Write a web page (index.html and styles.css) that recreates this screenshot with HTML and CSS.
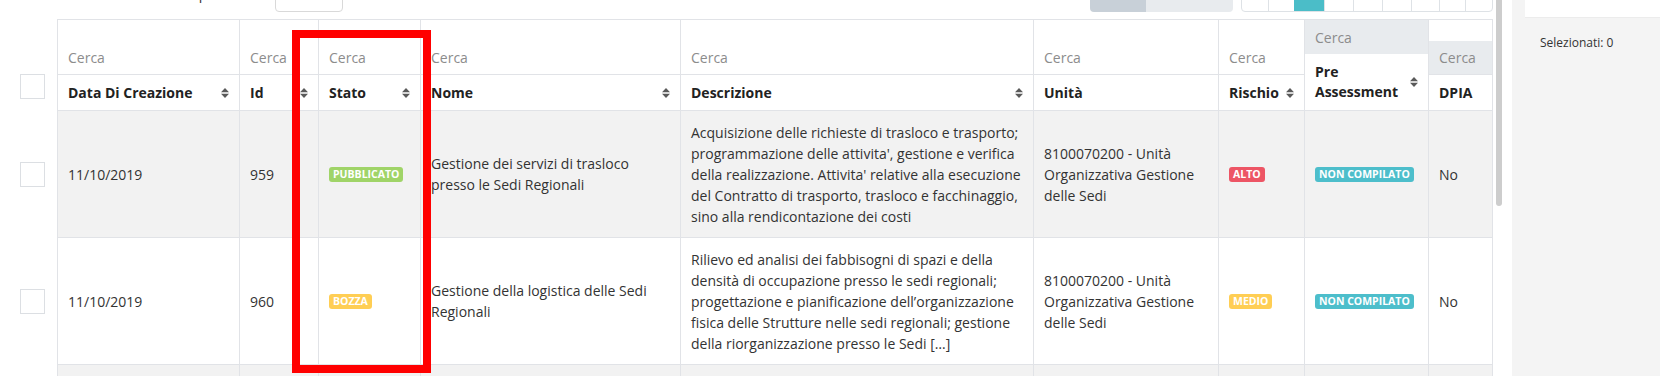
FILE: index.html
```html
<!DOCTYPE html>
<html lang="it">
<head>
<meta charset="utf-8">
<title>Trattamenti</title>
<link rel="stylesheet" href="styles.css">
</head>
<body>
<div class="page">
  <div class="main">
    <div class="col">
      <div class="toolbar">
        <span class="tb-label">Elementi per</span>
        <span class="tb-input"></span>
        <span class="tb-spacer"></span>
        <div class="btn-group"><span class="bg-a"></span><span class="bg-b"></span></div>
        <div class="pager">
          <span class="pg w26 first"></span>
          <span class="pg w26"></span>
          <span class="pg w30 active"></span>
          <span class="pg w29"></span>
          <span class="pg w29"></span>
          <span class="pg w29"></span>
          <span class="pg w28"></span>
          <span class="pg w26"></span>
          <span class="pg w27"></span>
        </div>
      </div>

      <div class="grid">
        <div class="row head">
          <div class="chk"><span class="box"></span></div>
          <div class="cell first">
            <div class="hs">Cerca</div>
            <div class="hl"><span>Data Di Creazione</span><svg class="sort" viewBox="0 0 8 10" width="8" height="10"><path d="M0 4.3L4 0L8 4.3Z M0 5.7L4 10L8 5.7Z"/></svg></div>
          </div>
          <div class="cell">
            <div class="hs">Cerca</div>
            <div class="hl"><span>Id</span><svg class="sort" viewBox="0 0 8 10" width="8" height="10"><path d="M0 4.3L4 0L8 4.3Z M0 5.7L4 10L8 5.7Z"/></svg></div>
          </div>
          <div class="cell">
            <div class="hs">Cerca</div>
            <div class="hl"><span>Stato</span><svg class="sort" viewBox="0 0 8 10" width="8" height="10"><path d="M0 4.3L4 0L8 4.3Z M0 5.7L4 10L8 5.7Z"/></svg></div>
          </div>
          <div class="cell">
            <div class="hs">Cerca</div>
            <div class="hl"><span>Nome</span><svg class="sort" viewBox="0 0 8 10" width="8" height="10"><path d="M0 4.3L4 0L8 4.3Z M0 5.7L4 10L8 5.7Z"/></svg></div>
          </div>
          <div class="cell">
            <div class="hs">Cerca</div>
            <div class="hl"><span>Descrizione</span><svg class="sort" viewBox="0 0 8 10" width="8" height="10"><path d="M0 4.3L4 0L8 4.3Z M0 5.7L4 10L8 5.7Z"/></svg></div>
          </div>
          <div class="cell">
            <div class="hs">Cerca</div>
            <div class="hl"><span>Unità</span></div>
          </div>
          <div class="cell">
            <div class="hs">Cerca</div>
            <div class="hl"><span>Rischio</span><svg class="sort" viewBox="0 0 8 10" width="8" height="10"><path d="M0 4.3L4 0L8 4.3Z M0 5.7L4 10L8 5.7Z"/></svg></div>
          </div>
          <div class="cell">
            <div class="hs-pre">Cerca</div>
            <div class="hl hl-pre"><span class="two">Pre Assessment</span><svg class="sort" viewBox="0 0 8 10" width="8" height="10"><path d="M0 4.3L4 0L8 4.3Z M0 5.7L4 10L8 5.7Z"/></svg></div>
          </div>
          <div class="cell">
            <div class="hs-dpia"><div class="gray">Cerca</div></div>
            <div class="hl"><span>DPIA</span></div>
          </div>
        </div>

        <div class="row body odd">
          <div class="chk"><span class="box"></span></div>
          <div class="cell first">11/10/2019</div>
          <div class="cell">959</div>
          <div class="cell"><span class="badge green">Pubblicato</span></div>
          <div class="cell nowrap">Gestione dei servizi di trasloco<br>presso le Sedi Regionali</div>
          <div class="cell nowrap">Acquisizione delle richieste di trasloco e trasporto;<br>programmazione delle attivita', gestione e verifica<br>della realizzazione. Attivita' relative alla esecuzione<br>del Contratto di trasporto, trasloco e facchinaggio,<br>sino alla rendicontazione dei costi</div>
          <div class="cell nowrap">8100070200 - Unità<br>Organizzativa Gestione<br>delle Sedi</div>
          <div class="cell"><span class="badge red">Alto</span></div>
          <div class="cell"><span class="badge teal">Non compilato</span></div>
          <div class="cell">No</div>
        </div>

        <div class="row body">
          <div class="chk"><span class="box"></span></div>
          <div class="cell first">11/10/2019</div>
          <div class="cell">960</div>
          <div class="cell"><span class="badge yellow">Bozza</span></div>
          <div class="cell nowrap">Gestione della logistica delle Sedi<br>Regionali</div>
          <div class="cell nowrap">Rilievo ed analisi dei fabbisogni di spazi e della<br>densità di occupazione presso le sedi regionali;<br>progettazione e pianificazione dell’organizzazione<br>fisica delle Strutture nelle sedi regionali; gestione<br>della riorganizzazione presso le Sedi […]</div>
          <div class="cell nowrap">8100070200 - Unità<br>Organizzativa Gestione<br>delle Sedi</div>
          <div class="cell"><span class="badge yellow">Medio</span></div>
          <div class="cell"><span class="badge teal">Non compilato</span></div>
          <div class="cell">No</div>
        </div>

        <div class="row body odd tail">
          <div class="chk"></div>
          <div class="cell first"></div>
          <div class="cell"></div>
          <div class="cell"></div>
          <div class="cell"></div>
          <div class="cell"></div>
          <div class="cell"></div>
          <div class="cell"></div>
          <div class="cell"></div>
          <div class="cell"></div>
        </div>
      </div>
    </div>
    <div class="vscroll"><div class="thumb"></div></div>
    <div class="highlight"></div>
  </div>
  <aside class="side">
    <div class="side-card"></div>
    <div class="sel">Selezionati: 0</div>
  </aside>
</div>
</body>
</html>
```

FILE: styles.css
```css
html, body {
  margin: 0;
  height: 376px;
  overflow: hidden;
  background: #fff;
}
body {
  font-family: "Open Sans", "Noto Sans", sans-serif;
  font-size: 14px;
  line-height: 21px;
  color: #333;
}
.page {
  display: flex;
  width: 1660px;
  height: 376px;
}
.main {
  position: relative;
  display: flex;
  width: 1512px;
  flex: none;
}
.col {
  width: 1493px;
  flex: none;
}
.vscroll {
  width: 6px;
  margin-left: 3px;
  flex: none;
}
.thumb {
  height: 206px;
  background: #cdcdcd;
  border-radius: 0 0 3px 3px;
}
.side {
  flex: 1;
  background: #f4f4f4;
  padding-left: 13px;
}
.side-card {
  height: 17px;
  background: #fff;
  border-bottom: 1px solid #ececec;
}
.sel {
  margin-top: 17px;
  padding-left: 15px;
  font-size: 12px;
  line-height: 16px;
  color: #333;
}

/* toolbar (top part scrolled out of view) */
.toolbar {
  height: 19px;
  box-sizing: border-box;
  padding: 0 0 7px 138px;
  display: flex;
  align-items: flex-end;
  overflow: hidden;
}
.tb-label {
  width: 137px;
  flex: none;
  white-space: nowrap;
  margin-bottom: 8px;
  color: #333;
}
.tb-input {
  width: 68px;
  height: 30px;
  flex: none;
  box-sizing: border-box;
  border: 1px solid #d9d9d9;
  border-radius: 4px;
}
.tb-spacer {
  flex: 1;
}
.btn-group {
  display: flex;
  width: 143px;
  height: 30px;
  flex: none;
  border-radius: 4px;
  overflow: hidden;
}
.bg-a {
  width: 56px;
  background: #c8d0d8;
}
.bg-b {
  flex: 1;
  background: #e8ebee;
}
.pager {
  display: flex;
  width: 252px;
  height: 40px;
  flex: none;
  margin-left: 8px;
  box-sizing: border-box;
  border: 1px solid #dee2e6;
  border-radius: 4px;
  overflow: hidden;
}
.pg {
  box-sizing: border-box;
  border-left: 1px solid #dee2e6;
}
.pg.first { border-left: none; }
.pg.active {
  background: #4bbdc8;
  border-left-color: #4bbdc8;
}
.w26 { width: 26px; }
.w27 { width: 27px; }
.w28 { width: 28px; }
.w29 { width: 29px; }
.w30 { width: 30px; }

/* grid table */
.row {
  display: grid;
  grid-template-columns: 57px 183px 79px 102px 260px 353px 185px 86px 124px 64px;
}
.cell {
  box-sizing: border-box;
  border-right: 1px solid #e1e3e7;
  border-bottom: 1px solid #e1e3e7;
  padding: 0 10px;
  display: flex;
  align-items: center;
  min-width: 0;
  overflow: hidden;
}
.cell.first {
  border-left: 1px solid #e1e3e7;
}
.chk {
  display: flex;
  align-items: center;
  padding-left: 20px;
}
.box {
  display: block;
  width: 25px;
  height: 25px;
  box-sizing: border-box;
  border: 1px solid #dcdfe3;
  background: #fff;
}

.head .cell {
  height: 92px;
  border-top: 1px solid #e1e3e7;
  padding: 0;
  flex-direction: column;
  align-items: stretch;
}
.head .chk {
  align-items: flex-start;
  padding-top: 55px;
}
.hs {
  height: 55px;
  flex: none;
  box-sizing: border-box;
  border-bottom: 1px solid #e1e3e7;
  display: flex;
  align-items: flex-end;
  padding: 0 10px 6px;
  color: #8c8c8c;
}
.hs-pre {
  height: 34px;
  flex: none;
  box-sizing: border-box;
  background: #e8ebee;
  display: flex;
  align-items: center;
  padding: 0 10px;
  color: #8c8c8c;
}
.hs-dpia {
  height: 55px;
  flex: none;
  box-sizing: border-box;
  border-bottom: 1px solid #e1e3e7;
  padding-top: 21px;
}
.hs-dpia .gray {
  height: 33px;
  background: #e8ebee;
  display: flex;
  align-items: center;
  padding: 0 10px;
  color: #8c8c8c;
}
.hl {
  flex: 1;
  display: flex;
  align-items: center;
  justify-content: space-between;
  gap: 6px;
  padding: 0 10px;
  font-weight: 700;
  color: #222;
  white-space: nowrap;
}
.hl-pre {
  white-space: normal;
  line-height: 20px;
}
.hl-pre .two {
  width: 86px;
}
.sort {
  flex: none;
  fill: #5a5a5a;
}

.body .cell {
  height: 127px;
}
.body.odd .cell {
  background: #f2f2f2;
}
.tail .cell {
  height: 40px;
}
.nowrap {
  white-space: nowrap;
}

.badge {
  display: inline-block;
  font-size: 10.5px;
  font-weight: 700;
  line-height: 15px;
  padding: 0 4px;
  border-radius: 3px;
  color: #fff;
  text-transform: uppercase;
}
.green { background: #a0d468; }
.red { background: #ed5565; }
.yellow { background: #ffce54; }
.teal { background: #4dbecb; }

/* annotation overlay */
.highlight {
  position: absolute;
  left: 292px;
  top: 30px;
  width: 139px;
  height: 343px;
  box-sizing: border-box;
  border: 8px solid #ff0000;
}
```
